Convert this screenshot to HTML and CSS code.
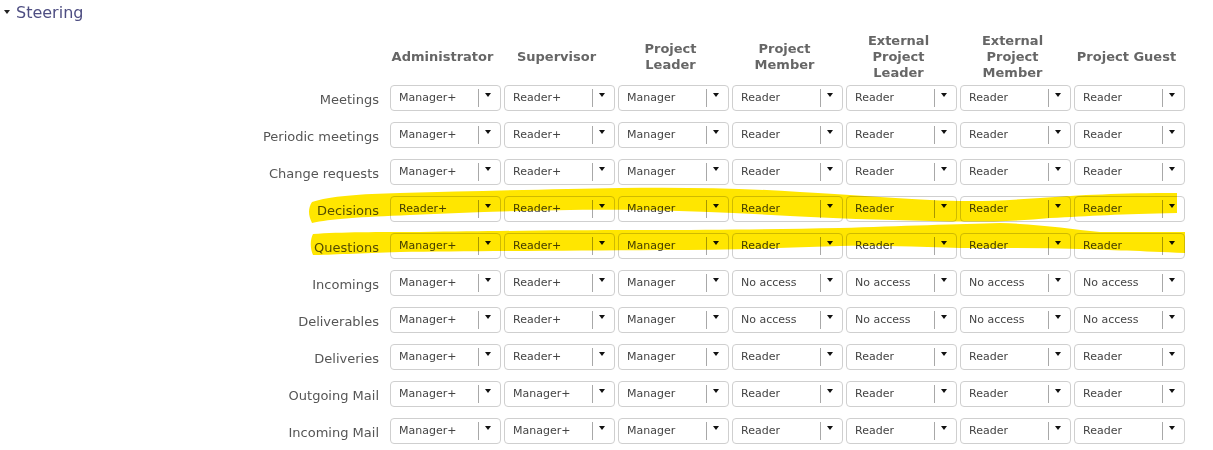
FILE: index.html
```html
<!DOCTYPE html>
<html>
<head>
<meta charset="utf-8">
<link rel="stylesheet" href="styles.css">
</head>
<body>
<div class="page">
  <div class="section-title"><span class="caret"></span>Steering</div>

  <div class="perm-table">
    <div class="head-row">
      <div class="corner"></div>
      <div class="head">Administrator</div>
      <div class="head">Supervisor</div>
      <div class="head">Project<br>Leader</div>
      <div class="head">Project<br>Member</div>
      <div class="head">External<br>Project<br>Leader</div>
      <div class="head">External<br>Project<br>Member</div>
      <div class="head">Project Guest</div>
    </div>

    <div class="row">
      <div class="label">Meetings</div>
      <div class="select"><span class="value">Manager+</span><span class="sep"></span><span class="arrow"><i></i></span></div>
      <div class="select"><span class="value">Reader+</span><span class="sep"></span><span class="arrow"><i></i></span></div>
      <div class="select"><span class="value">Manager</span><span class="sep"></span><span class="arrow"><i></i></span></div>
      <div class="select"><span class="value">Reader</span><span class="sep"></span><span class="arrow"><i></i></span></div>
      <div class="select"><span class="value">Reader</span><span class="sep"></span><span class="arrow"><i></i></span></div>
      <div class="select"><span class="value">Reader</span><span class="sep"></span><span class="arrow"><i></i></span></div>
      <div class="select"><span class="value">Reader</span><span class="sep"></span><span class="arrow"><i></i></span></div>
    </div>

    <div class="row">
      <div class="label">Periodic meetings</div>
      <div class="select"><span class="value">Manager+</span><span class="sep"></span><span class="arrow"><i></i></span></div>
      <div class="select"><span class="value">Reader+</span><span class="sep"></span><span class="arrow"><i></i></span></div>
      <div class="select"><span class="value">Manager</span><span class="sep"></span><span class="arrow"><i></i></span></div>
      <div class="select"><span class="value">Reader</span><span class="sep"></span><span class="arrow"><i></i></span></div>
      <div class="select"><span class="value">Reader</span><span class="sep"></span><span class="arrow"><i></i></span></div>
      <div class="select"><span class="value">Reader</span><span class="sep"></span><span class="arrow"><i></i></span></div>
      <div class="select"><span class="value">Reader</span><span class="sep"></span><span class="arrow"><i></i></span></div>
    </div>

    <div class="row">
      <div class="label">Change requests</div>
      <div class="select"><span class="value">Manager+</span><span class="sep"></span><span class="arrow"><i></i></span></div>
      <div class="select"><span class="value">Reader+</span><span class="sep"></span><span class="arrow"><i></i></span></div>
      <div class="select"><span class="value">Manager</span><span class="sep"></span><span class="arrow"><i></i></span></div>
      <div class="select"><span class="value">Reader</span><span class="sep"></span><span class="arrow"><i></i></span></div>
      <div class="select"><span class="value">Reader</span><span class="sep"></span><span class="arrow"><i></i></span></div>
      <div class="select"><span class="value">Reader</span><span class="sep"></span><span class="arrow"><i></i></span></div>
      <div class="select"><span class="value">Reader</span><span class="sep"></span><span class="arrow"><i></i></span></div>
    </div>

    <div class="row">
      <div class="label">Decisions</div>
      <div class="select"><span class="value">Reader+</span><span class="sep"></span><span class="arrow"><i></i></span></div>
      <div class="select"><span class="value">Reader+</span><span class="sep"></span><span class="arrow"><i></i></span></div>
      <div class="select"><span class="value">Manager</span><span class="sep"></span><span class="arrow"><i></i></span></div>
      <div class="select"><span class="value">Reader</span><span class="sep"></span><span class="arrow"><i></i></span></div>
      <div class="select"><span class="value">Reader</span><span class="sep"></span><span class="arrow"><i></i></span></div>
      <div class="select"><span class="value">Reader</span><span class="sep"></span><span class="arrow"><i></i></span></div>
      <div class="select"><span class="value">Reader</span><span class="sep"></span><span class="arrow"><i></i></span></div>
    </div>

    <div class="row">
      <div class="label">Questions</div>
      <div class="select"><span class="value">Manager+</span><span class="sep"></span><span class="arrow"><i></i></span></div>
      <div class="select"><span class="value">Reader+</span><span class="sep"></span><span class="arrow"><i></i></span></div>
      <div class="select"><span class="value">Manager</span><span class="sep"></span><span class="arrow"><i></i></span></div>
      <div class="select"><span class="value">Reader</span><span class="sep"></span><span class="arrow"><i></i></span></div>
      <div class="select"><span class="value">Reader</span><span class="sep"></span><span class="arrow"><i></i></span></div>
      <div class="select"><span class="value">Reader</span><span class="sep"></span><span class="arrow"><i></i></span></div>
      <div class="select"><span class="value">Reader</span><span class="sep"></span><span class="arrow"><i></i></span></div>
    </div>

    <div class="row">
      <div class="label">Incomings</div>
      <div class="select"><span class="value">Manager+</span><span class="sep"></span><span class="arrow"><i></i></span></div>
      <div class="select"><span class="value">Reader+</span><span class="sep"></span><span class="arrow"><i></i></span></div>
      <div class="select"><span class="value">Manager</span><span class="sep"></span><span class="arrow"><i></i></span></div>
      <div class="select"><span class="value">No access</span><span class="sep"></span><span class="arrow"><i></i></span></div>
      <div class="select"><span class="value">No access</span><span class="sep"></span><span class="arrow"><i></i></span></div>
      <div class="select"><span class="value">No access</span><span class="sep"></span><span class="arrow"><i></i></span></div>
      <div class="select"><span class="value">No access</span><span class="sep"></span><span class="arrow"><i></i></span></div>
    </div>

    <div class="row">
      <div class="label">Deliverables</div>
      <div class="select"><span class="value">Manager+</span><span class="sep"></span><span class="arrow"><i></i></span></div>
      <div class="select"><span class="value">Reader+</span><span class="sep"></span><span class="arrow"><i></i></span></div>
      <div class="select"><span class="value">Manager</span><span class="sep"></span><span class="arrow"><i></i></span></div>
      <div class="select"><span class="value">No access</span><span class="sep"></span><span class="arrow"><i></i></span></div>
      <div class="select"><span class="value">No access</span><span class="sep"></span><span class="arrow"><i></i></span></div>
      <div class="select"><span class="value">No access</span><span class="sep"></span><span class="arrow"><i></i></span></div>
      <div class="select"><span class="value">No access</span><span class="sep"></span><span class="arrow"><i></i></span></div>
    </div>

    <div class="row">
      <div class="label">Deliveries</div>
      <div class="select"><span class="value">Manager+</span><span class="sep"></span><span class="arrow"><i></i></span></div>
      <div class="select"><span class="value">Reader+</span><span class="sep"></span><span class="arrow"><i></i></span></div>
      <div class="select"><span class="value">Manager</span><span class="sep"></span><span class="arrow"><i></i></span></div>
      <div class="select"><span class="value">Reader</span><span class="sep"></span><span class="arrow"><i></i></span></div>
      <div class="select"><span class="value">Reader</span><span class="sep"></span><span class="arrow"><i></i></span></div>
      <div class="select"><span class="value">Reader</span><span class="sep"></span><span class="arrow"><i></i></span></div>
      <div class="select"><span class="value">Reader</span><span class="sep"></span><span class="arrow"><i></i></span></div>
    </div>

    <div class="row">
      <div class="label">Outgoing Mail</div>
      <div class="select"><span class="value">Manager+</span><span class="sep"></span><span class="arrow"><i></i></span></div>
      <div class="select"><span class="value">Manager+</span><span class="sep"></span><span class="arrow"><i></i></span></div>
      <div class="select"><span class="value">Manager</span><span class="sep"></span><span class="arrow"><i></i></span></div>
      <div class="select"><span class="value">Reader</span><span class="sep"></span><span class="arrow"><i></i></span></div>
      <div class="select"><span class="value">Reader</span><span class="sep"></span><span class="arrow"><i></i></span></div>
      <div class="select"><span class="value">Reader</span><span class="sep"></span><span class="arrow"><i></i></span></div>
      <div class="select"><span class="value">Reader</span><span class="sep"></span><span class="arrow"><i></i></span></div>
    </div>

    <div class="row">
      <div class="label">Incoming Mail</div>
      <div class="select"><span class="value">Manager+</span><span class="sep"></span><span class="arrow"><i></i></span></div>
      <div class="select"><span class="value">Manager+</span><span class="sep"></span><span class="arrow"><i></i></span></div>
      <div class="select"><span class="value">Manager</span><span class="sep"></span><span class="arrow"><i></i></span></div>
      <div class="select"><span class="value">Reader</span><span class="sep"></span><span class="arrow"><i></i></span></div>
      <div class="select"><span class="value">Reader</span><span class="sep"></span><span class="arrow"><i></i></span></div>
      <div class="select"><span class="value">Reader</span><span class="sep"></span><span class="arrow"><i></i></span></div>
      <div class="select"><span class="value">Reader</span><span class="sep"></span><span class="arrow"><i></i></span></div>
    </div>
  </div>

  <svg class="marker" width="1213" height="450" viewBox="0 0 1213 450" aria-hidden="true">
    <path d="M312,202 C330,196 360,194 400,193 C480,191 560,189 620,188 C680,187 740,188 800,192 C850,195 880,197 930,200 C970,202 1000,201 1040,198 C1080,195 1120,193 1177,193 L1177,213 C1120,214 1090,216 1050,218 C1010,222 970,222 930,221 C880,220 830,218 790,216 C740,213 690,211 640,210 C560,209 480,212 410,215 C360,217 330,219 312,223 C308,215 308,208 312,202 Z"/>
    <path d="M313,234 C340,232 380,232 420,232 C500,231 560,230 640,230 C720,230 780,229 840,228 C900,226 960,224 1000,223 C1040,224 1070,229 1100,232 L1185,232 L1185,253 C1140,251 1110,250 1080,249 C1040,248 1000,248 960,248 C920,247 880,245 840,246 C780,248 720,250 660,250 C560,251 460,251 400,252 C360,253 330,255 313,255 C310,248 310,240 313,234 Z"/>
  </svg>
</div>
</body>
</html>
```

FILE: styles.css
```css
html, body {
  margin: 0;
  padding: 0;
  background: #ffffff;
}

.page {
  position: relative;
  width: 1213px;
  height: 450px;
  overflow: hidden;
  font-family: "DejaVu Sans", Verdana, sans-serif;
}

.section-title {
  display: flex;
  align-items: center;
  padding: 3px 0 0 4px;
  height: 20px;
  font-size: 16px;
  line-height: 20px;
  color: #4e4e82;
}

.caret {
  width: 0;
  height: 0;
  border-left: 3px solid transparent;
  border-right: 3px solid transparent;
  border-top: 4px solid #222;
  margin: 0 6px 0 0;
  position: relative;
  top: -1px;
}

.perm-table {
  margin-top: 10px;
}

.head-row,
.row {
  display: grid;
  grid-template-columns: 387px repeat(7, 111px);
  column-gap: 3px;
}

.head-row {
  height: 48px;
  align-items: center;
  margin-bottom: 4px;
}

.head {
  text-align: center;
  font-weight: bold;
  font-size: 13px;
  line-height: 16px;
  color: #666666;
  padding-right: 6px;
  white-space: nowrap;
}

.row {
  height: 26px;
  margin-bottom: 11px;
}

.label {
  text-align: right;
  padding: 7px 8px 0 0;
  font-size: 13px;
  line-height: 16px;
  color: #555555;
  white-space: nowrap;
}

.select {
  box-sizing: border-box;
  height: 26px;
  border: 1px solid #cfcfcf;
  border-radius: 4px;
  display: flex;
  background: #ffffff;
}

.value {
  flex: 1;
  padding: 5px 0 0 8px;
  font-size: 11px;
  line-height: 14px;
  color: #444444;
  white-space: nowrap;
}

.sep {
  width: 1px;
  margin: 3px 0;
  background: #a8a8a8;
}

.arrow {
  width: 21px;
  padding: 7px 0 0 6px;
  box-sizing: border-box;
}

.arrow i {
  display: block;
  width: 0;
  height: 0;
  border-left: 3.5px solid transparent;
  border-right: 3.5px solid transparent;
  border-top: 4px solid #111;
}

.marker {
  position: absolute;
  left: 0;
  top: 0;
  pointer-events: none;
  mix-blend-mode: multiply;
}

.marker path {
  fill: #ffe600;
}
```
